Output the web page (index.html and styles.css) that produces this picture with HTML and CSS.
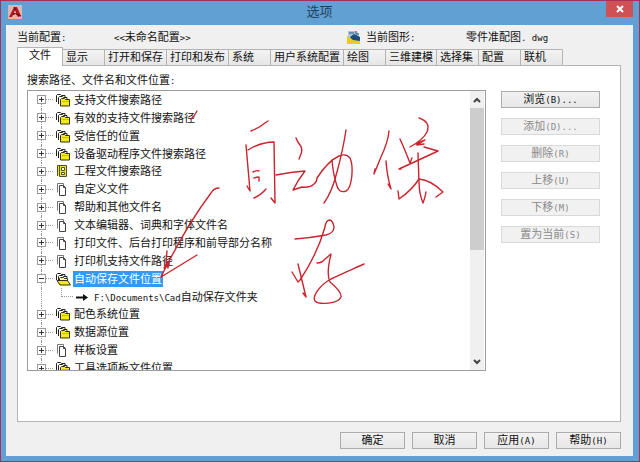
FILE: index.html
```
<!DOCTYPE html>
<html lang="zh-CN">
<head>
<meta charset="utf-8">
<title>选项</title>
<link rel="stylesheet" href="styles.css">
</head>
<body>
<svg class="defs" aria-hidden="true">
  <symbol id="folders" viewBox="0 0 16 14">
    <path d="M1.5 9V2.5l1-1h3l1 1H10V4" fill="#fff" stroke="#222"/>
    <path d="M3.5 11V4.500l1-1h3l1 1H12V6" fill="#fff" stroke="#222"/>
    <path d="M5.500 13V6.500l1-1h3l1 1h4V13z" fill="#f2ea1c" stroke="#33300a"/>
    <path d="M7 8.500h7" stroke="#c9c118"/>
  </symbol>
  <symbol id="folders-open" viewBox="0 0 16 14">
    <path d="M1.500 8V2.500l1-1h3l1 1H10V4" fill="#fff" stroke="#222"/>
    <path d="M3.500 10V4.500l1-1h3l1 1H12V6" fill="#fff" stroke="#222"/>
    <path d="M4.500 12V6.500l1-1h3l1 1h3V9" fill="#fff9a0" stroke="#33300a"/>
    <path d="M2 8.500h10.500l3 4.500H5z" fill="#f2ea1c" stroke="#33300a"/>
  </symbol>
  <symbol id="project" viewBox="0 0 16 14">
    <path d="M2.500 12V1.500h2v10M4.500 12.500v-11h7v11z" fill="#e9e03a" stroke="#55501a"/>
    <path d="M6.500 3.500h3v3h-3zM6.500 8.500h3v2h-3z" fill="#fff" stroke="#55501a"/>
  </symbol>
  <symbol id="pages" viewBox="0 0 16 14">
    <path d="M2.500 10.500v-9h6v2" fill="#fff" stroke="#777"/>
    <path d="M4.500 3.500h4l2 2v8h-6z" fill="#fff" stroke="#444"/>
    <path d="M8.500 3.500v2h2" fill="none" stroke="#444"/>
  </symbol>
  <symbol id="arrow" viewBox="0 0 14 10">
    <path d="M1 5.500h10" stroke="#111" stroke-width="2"/>
    <path d="M8 2l5 3.500L8 9z" fill="#111"/>
  </symbol>
</svg>

<div class="window">
  <header class="titlebar">
    <svg class="app-icon" viewBox="0 0 14 14" aria-hidden="true">
      <path d="M0 0h14v14H0z" fill="#ddb6b3"/>
      <path d="M1 12L6 2h3l4 9-3 1-2-3-3 1-1 2z" fill="#b4171c"/>
      <path d="M6 2l2 4-3 4M8 9l5 2" fill="none" stroke="#5e090d"/>
      <path d="M7 5l1 3H6z" fill="#f0d4d2"/>
    </svg>
    <h1 class="title">选项</h1>
    <button class="close" type="button" aria-label="关闭">
      <svg viewBox="0 0 8 8" aria-hidden="true"><path d="M1 1l6 6M7 1L1 7" stroke="#fff" stroke-width="2"/></svg>
    </button>
  </header>

  <main class="client">
    <div class="status">
      <span>当前配置<span class="latin">:</span></span>
      <span><span class="latin">&lt;&lt;</span>未命名配置<span class="latin">&gt;&gt;</span></span>
      <svg class="drawing-icon" viewBox="0 0 14 14" aria-hidden="true">
        <path d="M1 1h8l3 3v7H1z" fill="#a9c9df"/>
        <path d="M2 3h5M9 1v3h3" fill="none" stroke="#33556f"/>
        <path d="M3 7l4-3 6 3v4H6z" fill="#1f4a7c"/>
        <path d="M0 6l6 4 7 1v3H0z" fill="#f1c81d"/>
      </svg>
      <span>当前图形<span class="latin">:</span></span>
      <span>零件准配图<span class="latin">. dwg</span></span>
    </div>

    <div class="tabs" role="tablist">
      <button class="tab active" role="tab" aria-selected="true">文件</button>
      <button class="tab" role="tab">显示</button>
      <button class="tab" role="tab">打开和保存</button>
      <button class="tab" role="tab">打印和发布</button>
      <button class="tab" role="tab">系统</button>
      <button class="tab" role="tab">用户系统配置</button>
      <button class="tab" role="tab">绘图</button>
      <button class="tab" role="tab">三维建模</button>
      <button class="tab" role="tab">选择集</button>
      <button class="tab" role="tab">配置</button>
      <button class="tab" role="tab">联机</button>
    </div>

    <section class="panel" role="tabpanel">
      <div class="paths">
        <h2 class="label" id="paths-label">搜索路径、文件名和文件位置<span class="latin">:</span></h2>
        <div class="tree-box">
          <ul class="tree" role="tree" aria-labelledby="paths-label">
            <li class="node first" role="treeitem"><button class="toggle" aria-label="展开"></button><svg class="icon"><use href="#folders"/></svg><span class="name">支持文件搜索路径</span></li>
            <li class="node" role="treeitem"><button class="toggle" aria-label="展开"></button><svg class="icon"><use href="#folders"/></svg><span class="name">有效的支持文件搜索路径</span></li>
            <li class="node" role="treeitem"><button class="toggle" aria-label="展开"></button><svg class="icon"><use href="#folders"/></svg><span class="name">受信任的位置</span></li>
            <li class="node" role="treeitem"><button class="toggle" aria-label="展开"></button><svg class="icon"><use href="#folders"/></svg><span class="name">设备驱动程序文件搜索路径</span></li>
            <li class="node" role="treeitem"><button class="toggle" aria-label="展开"></button><svg class="icon"><use href="#project"/></svg><span class="name">工程文件搜索路径</span></li>
            <li class="node" role="treeitem"><button class="toggle" aria-label="展开"></button><svg class="icon"><use href="#pages"/></svg><span class="name">自定义文件</span></li>
            <li class="node" role="treeitem"><button class="toggle" aria-label="展开"></button><svg class="icon"><use href="#pages"/></svg><span class="name">帮助和其他文件名</span></li>
            <li class="node" role="treeitem"><button class="toggle" aria-label="展开"></button><svg class="icon"><use href="#pages"/></svg><span class="name">文本编辑器、词典和字体文件名</span></li>
            <li class="node" role="treeitem"><button class="toggle" aria-label="展开"></button><svg class="icon"><use href="#pages"/></svg><span class="name">打印文件、后台打印程序和前导部分名称</span></li>
            <li class="node" role="treeitem"><button class="toggle" aria-label="展开"></button><svg class="icon"><use href="#pages"/></svg><span class="name">打印机支持文件路径</span></li>
            <li class="node" role="treeitem" aria-selected="true" aria-expanded="true"><button class="toggle open" aria-label="折叠"></button><svg class="icon"><use href="#folders-open"/></svg><span class="name selected">自动保存文件位置</span></li>
            <li class="node child" role="treeitem" aria-level="2"><span class="branch"></span><svg class="arrow"><use href="#arrow"/></svg><span class="name"><span class="latin">F:\Documents\Cad</span>自动保存文件夹</span></li>
            <li class="node" role="treeitem"><button class="toggle" aria-label="展开"></button><svg class="icon"><use href="#folders"/></svg><span class="name">配色系统位置</span></li>
            <li class="node" role="treeitem"><button class="toggle" aria-label="展开"></button><svg class="icon"><use href="#folders"/></svg><span class="name">数据源位置</span></li>
            <li class="node" role="treeitem"><button class="toggle" aria-label="展开"></button><svg class="icon"><use href="#pages"/></svg><span class="name">样板设置</span></li>
            <li class="node" role="treeitem"><button class="toggle" aria-label="展开"></button><svg class="icon"><use href="#folders"/></svg><span class="name">工具选项板文件位置</span></li>
          </ul>
          <div class="scrollbar">
            <button class="scroll-step" aria-label="向上滚动"><svg viewBox="0 0 8 6" aria-hidden="true"><path d="M1 5l3-3 3 3" fill="none" stroke="#444" stroke-width="2"/></svg></button>
            <div class="track"><div class="thumb"></div></div>
            <button class="scroll-step" aria-label="向下滚动"><svg viewBox="0 0 8 6" aria-hidden="true"><path d="M1 1l3 3 3-3" fill="none" stroke="#444" stroke-width="2"/></svg></button>
          </div>
        </div>
      </div>
      <div class="actions">
        <button class="btn" type="button">浏览<span class="latin">(B)...</span></button>
        <button class="btn" type="button" disabled>添加<span class="latin">(D)...</span></button>
        <button class="btn" type="button" disabled>删除<span class="latin">(R)</span></button>
        <button class="btn" type="button" disabled>上移<span class="latin">(U)</span></button>
        <button class="btn" type="button" disabled>下移<span class="latin">(M)</span></button>
        <button class="btn" type="button" disabled>置为当前<span class="latin">(S)</span></button>
      </div>
    </section>

    <footer class="footer">
      <button class="btn" type="button">确定</button>
      <button class="btn" type="button">取消</button>
      <button class="btn" type="button">应用<span class="latin">(A)</span></button>
      <button class="btn" type="button">帮助<span class="latin">(H)</span></button>
    </footer>
  </main>

  <svg class="ink" viewBox="0 0 640 462" aria-hidden="true">
    <path d="M197 111l-3 5-3 3"/>
    <path d="M219 188q-5 0-8 5Q186 226 161 277l36-22M167 251l-1 12 2 5 1-6M164 268l3-6"/>
    <path d="M251 131q8-3 14-8l3-2"/>
    <path d="M246 145l4 46-3-5"/>
    <path d="M248 150q13-8 26-8l1 61-4-5"/>
    <path d="M253 172q4-2 6-1M254 178q6-2 5 0v3M254 198q7-3 12-9"/>
    <path d="M296 138q1 3 4 7 3 4 1 9l-2 5"/>
    <path d="M276 175q15-3 29-4-7 9-12 19l9-3q8 1 12-3 3-2 3-6 11-17 22-22 7-3 11 2c4 9 2 30-4 33-5 2-8-1-9-5q-4-12-5-26"/>
    <path d="M346 130q-3 20-9 42-5 20-13 31"/>
    <path d="M389 131q-1 11-8 26l-7 17 1-5"/>
    <path d="M386 161q1 15 5 28l-3-5"/>
    <path d="M400 139q5 11 10 24l2-5"/>
    <path d="M419 118q12 4 8 14-4 8-17 15M416 144l9-4-8 5 7-1"/>
    <path d="M424 147l14 4q-17 8-39 18h2"/>
    <path d="M418 153l1 29q0 11 4 21 2-5 3-11"/>
    <path d="M398 191l1 8q13-9 20-20 12 1 24 13l-7 5"/>
    <path d="M295 239q15-1 31-4 8-2 8-8-1-6-4-7-4 0-5 7-8 28-25 53l-2 2-6-10"/>
    <path d="M298 264l8 33-3-4"/>
    <path d="M317 263q5 0 8-4l6-5q-5 20-1 28 12 10 11 15c-3 7-22 8-26 4-3-5 5-16 16-22 12-6 22-10 33-15"/>
  </svg>
</div>
</body>
</html>
```
FILE: styles.css
```
* {
  box-sizing: border-box;
}

body {
  margin: 0;
  font-family: "Liberation Sans", "Noto Sans CJK SC", sans-serif;
  font-size: 11px;
  line-height: 14px;
  color: #111;
}

button {
  margin: 0;
  padding: 0;
  font: inherit;
  color: inherit;
}

h1,
h2 {
  margin: 0;
  font-weight: normal;
}

.defs {
  display: none;
}

.latin {
  font-family: "DejaVu Sans Mono", monospace;
  font-size: 9px;
  line-height: 1;
}

.window {
  position: relative;
  display: flex;
  flex-direction: column;
  min-height: 100vh;
  padding: 0 6px 5px 5px;
  border: 1px solid #a5305c;
  background: #61a0d2;
}

.titlebar {
  display: grid;
  grid-template-columns: 1fr auto 1fr;
  align-items: start;
  height: 24px;
}

.app-icon {
  width: 14px;
  height: 14px;
  margin: 4px 2px;
}

.title {
  padding-top: 2px;
  font-size: 13px;
  line-height: 18px;
  color: #1f3f5c;
}

.close {
  justify-self: end;
  display: grid;
  place-items: center;
  width: 27px;
  height: 16px;
  border: 0;
  background: #cf5055;
}

.close svg {
  width: 8px;
  height: 8px;
}

.client {
  flex: 1;
  display: flex;
  flex-direction: column;
  padding: 4px 12px 7px 11px;
  background: #f0f0f0;
}

.status {
  display: grid;
  grid-template-columns: 97px 233px 19px 100px 1fr;
  align-items: center;
  height: 16px;
}

.drawing-icon {
  width: 14px;
  height: 14px;
}

.tabs {
  display: flex;
  align-items: flex-end;
  height: 20px;
  padding-top: 2px;
}

.tab {
  min-width: 42px;
  height: 16px;
  padding: 0 3px;
  border: 1px solid #b4b4b4;
  border-width: 1px 1px 0 0;
  background: linear-gradient(#f3f3f3, #e6e6e6);
  line-height: 15px;
  text-align: left;
  white-space: nowrap;
}

.tab.active {
  z-index: 1;
  min-width: 46px;
  height: 19px;
  margin-bottom: -1px;
  padding-bottom: 3px;
  border-left-width: 1px;
  background: #fff;
  text-align: center;
}

.panel {
  flex: 1;
  display: flex;
  gap: 15px;
  padding: 7px 20px 50px 9px;
  border: 1px solid #b4b4b4;
  background: #fff;
}

.paths {
  flex: 1;
  display: flex;
  flex-direction: column;
  gap: 3px;
}

.label {
  font-size: 11px;
}

.tree-box {
  flex: 1;
  display: flex;
  padding-right: 1px;
  border: 1px solid #9c9c9c;
  overflow: hidden;
}

.tree {
  flex: 1;
  display: grid;
  grid-auto-rows: 1fr;
  margin: 0 0 -7px;
  padding: 0 0 0 9px;
  list-style: none;
}

.node {
  position: relative;
  display: flex;
  align-items: center;
  white-space: nowrap;
}

.node::before {
  content: "";
  position: absolute;
  left: 4px;
  top: 0;
  bottom: 0;
  border-left: 1px dotted #999;
}

.node.first::before {
  top: 50%;
}

.toggle {
  position: relative;
  width: 9px;
  height: 9px;
  margin-right: 9px;
  border: 1px solid #999;
  background:
    linear-gradient(#333, #333) center / 5px 1px no-repeat,
    linear-gradient(#333, #333) center / 1px 5px no-repeat,
    #fff;
}

.toggle.open {
  background: linear-gradient(#333, #333) center / 5px 1px no-repeat, #fff;
}

.toggle::after {
  content: "";
  position: absolute;
  left: 8px;
  top: 3px;
  width: 7px;
  border-top: 1px dotted #999;
}

.icon {
  width: 16px;
  height: 14px;
  margin-right: 2px;
}

.name {
  padding: 0 1px;
  line-height: 16px;
}

.selected {
  background: #3399f5;
  color: #fff;
}

.branch {
  align-self: flex-start;
  width: 12px;
  height: 9px;
  margin: 0 2px 0 24px;
  border: 1px dotted #999;
  border-width: 0 0 1px 1px;
}

.arrow {
  width: 14px;
  height: 10px;
  margin-right: 4px;
}

.scrollbar {
  display: flex;
  flex-direction: column;
  width: 14px;
  background: #f0f0f0;
}

.scroll-step {
  display: grid;
  place-items: center;
  height: 17px;
  border: 0;
  background: #f0f0f0;
}

.scroll-step svg {
  width: 8px;
  height: 6px;
}

.track {
  flex: 1;
}

.thumb {
  height: 58%;
  background: #cdcdcd;
}

.actions {
  display: flex;
  flex-direction: column;
  gap: 10px;
  width: 99px;
  padding-top: 18px;
}

.btn {
  height: 17px;
  border: 1px solid #acacac;
  background: linear-gradient(#f2f2f2, #e7e7e7);
  line-height: 15px;
  white-space: nowrap;
}

.btn:disabled {
  border-color: #d9d9d9;
  background: #f1f1f1;
  color: #8a8a8a;
}

.footer {
  display: flex;
  justify-content: flex-end;
  gap: 7px;
  padding-top: 10px;
}

.footer .btn {
  width: 65px;
}

.ink {
  position: absolute;
  inset: -1px;
  width: calc(100% + 2px);
  height: calc(100% + 2px);
  fill: none;
  stroke: #c9252e;
  stroke-width: 1.4;
  stroke-linecap: round;
  stroke-linejoin: round;
  pointer-events: none;
}
```
